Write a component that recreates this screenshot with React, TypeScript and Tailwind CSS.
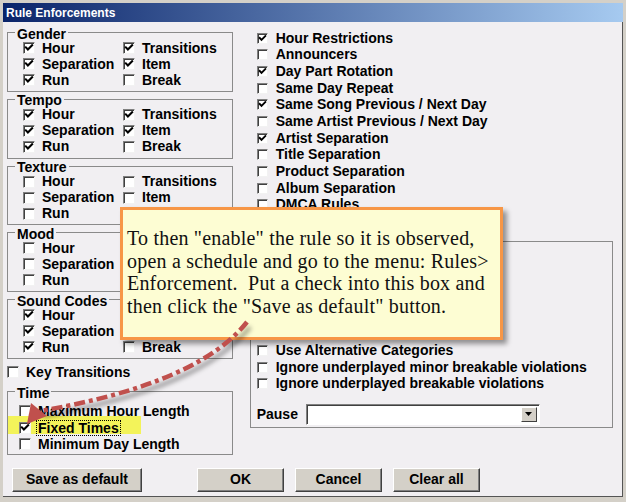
import React from "react";

function Box({ checked, small }: { checked?: boolean; small?: boolean }) {
  return (
    <span
      className={
        small
          ? "relative inline-block shrink-0 w-[11px] h-[11px] bg-white border border-t-[#808080] border-l-[#808080] border-b-[#f2f2f2] border-r-[#f2f2f2] shadow-[inset_1px_1px_0_#404040]"
          : "relative inline-block shrink-0 w-[12px] h-[12px] bg-white border border-t-[#808080] border-l-[#808080] border-b-[#f2f2f2] border-r-[#f2f2f2] shadow-[inset_1px_1px_0_#404040]"
      }
    >
      {checked && (
        <svg className="absolute inset-0 w-full h-full" viewBox="0 0 10 10">
          <path d="M1.9 4.4 L3.9 6.5 L8.1 2.3" stroke="#000" strokeWidth="2.1" fill="none" strokeLinecap="square" />
        </svg>
      )}
    </span>
  );
}

type Row = [string, boolean, string, boolean];

function Group({ title, rows }: { title: string; rows: Row[] }) {
  return (
    <fieldset className="border border-[#8a8a8a] pb-[2.75px]">
      <legend className="ml-[7px] px-[2px] text-[14px] font-bold leading-[15px]">
        <span className="relative top-[1.5px]">{title}</span>
      </legend>
      <div className="pl-[15px] grid grid-cols-[100px_auto]">
        {rows.map((r, i) => (
          <React.Fragment key={i}>
            <div className="flex items-center h-[16px] gap-[7px] text-[14px] font-bold whitespace-nowrap">
              <Box checked={r[1]} />
              {r[0]}
            </div>
            <div className="flex items-center h-[16px] gap-[7px] text-[14px] font-bold whitespace-nowrap">
              <Box checked={r[3]} />
              {r[2]}
            </div>
          </React.Fragment>
        ))}
      </div>
    </fieldset>
  );
}

function RightRow({ label, checked }: { label: string; checked?: boolean }) {
  return (
    <div className="flex items-center h-[16.67px] gap-[8px] text-[14px] font-bold whitespace-nowrap">
      <Box small checked={checked} />
      {label}
    </div>
  );
}

function Btn({ label, w }: { label: string; w: string }) {
  return (
    <div
      className={`${w} h-[24px] bg-[#d4d0c8] border border-t-white border-l-white border-r-[#404040] border-b-[#404040] shadow-[inset_-1px_-1px_0_#808080] flex items-center justify-center text-[14px] font-bold`}
    >
      {label}
    </div>
  );
}

export default function App() {
  const full: Row[] = [
    ["Hour", true, "Transitions", true],
    ["Separation", true, "Item", true],
    ["Run", true, "Break", false],
  ];
  const texture: Row[] = [
    ["Hour", false, "Transitions", false],
    ["Separation", false, "Item", false],
    ["Run", false, "", false],
  ];
  const mood: Row[] = [
    ["Hour", false, "", false],
    ["Separation", false, "", false],
    ["Run", false, "", false],
  ];
  const sound: Row[] = [
    ["Hour", true, "", false],
    ["Separation", true, "", false],
    ["Run", true, "Break", false],
  ];
  const right: [string, boolean][] = [
    ["Hour Restrictions", true],
    ["Announcers", false],
    ["Day Part Rotation", true],
    ["Same Day Repeat", false],
    ["Same Song Previous / Next Day", true],
    ["Same Artist Previous / Next  Day", false],
    ["Artist Separation", true],
    ["Title Separation", false],
    ["Product Separation", false],
    ["Album Separation", false],
    ["DMCA Rules", false],
  ];
  const arrow = "M247 322 C215 362 150 392 40 411";
  return (
    <div className="relative w-[626px] h-[502px] bg-[#d4d0c8] overflow-hidden pt-[3px] px-[3px] font-['Liberation_Sans',Arial,sans-serif] text-black">
      <div className="h-[19px] bg-[linear-gradient(to_right,#0a246a,#a6caf0)] flex items-center pl-[3px] text-white text-[12px] font-bold">
        Rule Enforcements
      </div>
      <div className="h-[475px] bg-[#f1eff2] border-r border-b border-r-[#555] border-b-[#555] flex flex-col">
        <div className="flex">
          <div className="ml-[4px] w-[226px] pt-[3px] flex flex-col">
            <Group title="Gender" rows={full} />
            <Group title="Tempo" rows={full} />
            <Group title="Texture" rows={texture} />
            <Group title="Mood" rows={mood} />
            <Group title="Sound Codes" rows={sound} />
            <div className="mt-[5.25px] h-[16px] flex items-center gap-[7px] text-[14px] font-bold whitespace-nowrap">
              <Box />
              Key Transitions
            </div>
            <fieldset className="mt-[4px] border border-[#8a8a8a] pb-[1.75px]">
              <legend className="ml-[7px] px-[2px] text-[14px] font-bold leading-[15px]">
                <span className="relative top-[1.5px]">Time</span>
              </legend>
              <div className="pl-[11px] pt-[3.75px] flex flex-col">
                <div className="flex items-center h-[16.5px] gap-[7px] text-[14px] font-bold whitespace-nowrap">
                  <Box />
                  Maximum Hour Length
                </div>
                <div className="relative flex items-center h-[16.5px] gap-[6px] text-[14px] font-bold whitespace-nowrap">
                  <span className="absolute left-[-10.7px] top-[-3px] w-[133px] h-[17.5px] bg-[#f3f35a]" />
                  <span className="relative flex items-center">
                    <Box checked />
                  </span>
                  <span className="relative outline outline-1 outline-dotted outline-black px-[1px] leading-[14px]">Fixed Times</span>
                </div>
                <div className="flex items-center h-[16.5px] gap-[7px] text-[14px] font-bold whitespace-nowrap">
                  <Box />
                  Minimum Day Length
                </div>
              </div>
            </fieldset>
          </div>
          <div className="ml-[17px] w-[363px] pt-[8px] flex flex-col">
            <div className="pl-[6.7px] flex flex-col">
              {right.map(([l, c]) => (
                <RightRow key={l} label={l} checked={c} />
              ))}
            </div>
            <div className="mt-[27.7px] h-[187px] border border-[#8a8a8a] flex flex-col pl-[5.7px] pt-[100.4px]">
              <RightRow label="Use Alternative Categories" />
              <RightRow label="Ignore underplayed minor breakable violations" />
              <RightRow label="Ignore underplayed breakable violations" />
              <div className="mt-[11.6px] h-[21px] flex items-center">
                <span className="text-[14px] font-bold">Pause</span>
                <div className="ml-[8px] w-[234px] h-[21px] bg-white border border-t-[#808080] border-l-[#808080] border-b-white border-r-white shadow-[inset_1px_1px_0_#404040] flex justify-end p-[2px]">
                  <div className="w-[16px] h-full bg-[#d4d0c8] border border-t-white border-l-white border-r-[#404040] border-b-[#404040] flex items-center justify-center">
                    <svg width="7" height="4" viewBox="0 0 7 4">
                      <path d="M0 0 H7 L3.5 4 Z" fill="#000" />
                    </svg>
                  </div>
                </div>
              </div>
            </div>
          </div>
        </div>
        <div className="mt-[12.5px] flex pl-[9px]">
          <Btn label="Save as default" w="w-[130px]" />
          <div className="ml-[55px] flex gap-[11px]">
            <Btn label="OK" w="w-[87px]" />
            <Btn label="Cancel" w="w-[87px]" />
            <Btn label="Clear all" w="w-[87px]" />
          </div>
        </div>
      </div>

      <div className="absolute left-[120px] top-[207px] w-[383px] h-[133px] bg-[#fdfdd3] border-[3px] border-[#f79646] shadow-[4px_4px_5px_rgba(0,0,0,0.4)] pl-[4px] pt-[17px] font-['Liberation_Serif','Times_New_Roman',serif] text-[20px] tracking-[0.2px] leading-[22.7px] text-[#111] whitespace-pre">
        <div>To then "enable" the rule so it is observed,</div>
        <div>open a schedule and go to the menu: Rules&gt;</div>
        <div>Enforcement.  Put a check into this box and</div>
        <div>then click the "Save as default" button.</div>
      </div>

      <svg className="absolute left-0 top-0 pointer-events-none" width="626" height="502">
        <defs>
          <filter id="blr" x="-20%" y="-20%" width="140%" height="140%">
            <feGaussianBlur stdDeviation="2" />
          </filter>
        </defs>
        <path d={arrow} transform="translate(3,5)" stroke="rgba(0,0,0,0.3)" strokeWidth="5" fill="none" filter="url(#blr)" />
        <path d={arrow} stroke="#c0504d" strokeWidth="4.5" fill="none" strokeDasharray="11 4 4 4" />
        <polygon points="27,424 31,403 47,416" fill="#c0504d" />
      </svg>
    </div>
  );
}
